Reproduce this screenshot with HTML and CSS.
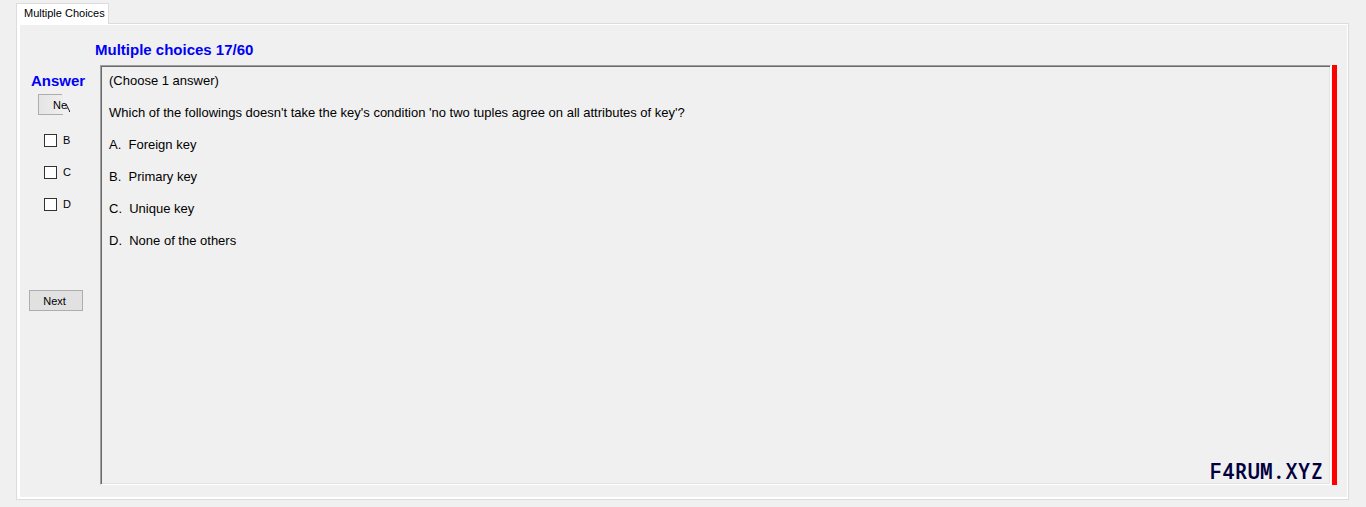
FILE: index.html
```html
<!DOCTYPE html>
<html lang="en">
<head>
<meta charset="utf-8">
<title>Multiple Choices</title>
<link rel="stylesheet" href="styles.css">
</head>
<body>
<div class="tabs" role="tablist">
  <button class="tab" role="tab" id="tab-mc" aria-selected="true" aria-controls="panel-mc">Multiple Choices</button>
</div>
<main class="panel" id="panel-mc" role="tabpanel" aria-labelledby="tab-mc">
  <h1 class="title">Multiple choices 17/60</h1>
  <div class="content">
    <form class="sidebar">
      <h2 class="answer-title">Answer</h2>
      <button class="partial" type="button"><span>Ne</span><svg class="scrap" width="6" height="12" viewBox="0 0 6 12" aria-hidden="true"><path d="M1 3L4.500 10M1.500 8L2.500 6.500M4 10.500H5" fill="none" stroke="#222233" stroke-width="1"/></svg></button>
      <label class="choice"><input type="checkbox" name="b">B</label>
      <label class="choice"><input type="checkbox" name="c">C</label>
      <label class="choice"><input type="checkbox" name="d">D</label>
      <button class="next" type="button">Next</button>
    </form>
    <section class="question">
      <div class="text">
        <p>(Choose 1 answer)</p>
        <p>Which of the followings doesn't take the key's condition 'no two tuples agree on all attributes of key'?</p>
        <p>A.  Foreign key</p>
        <p>B.  Primary key</p>
        <p>C.  Unique key</p>
        <p>D.  None of the others</p>
      </div>
      <p class="brand">F4RUM.XYZ</p>
    </section>
    <div class="marker"></div>
  </div>
</main>
</body>
</html>
```
FILE: styles.css
```css
* { box-sizing: border-box; }
html { height: 100%; }
body {
  margin: 0;
  min-height: 100%;
  padding: 3px 17px 7px 16px;
  display: flex;
  flex-direction: column;
  background: #f0f0f0;
  color: #000;
  font: 11px/16px "Liberation Sans", Arial, sans-serif;
}
h1, h2, p { margin: 0; }
button { font: inherit; color: inherit; border-radius: 0; }
.tabs { display: flex; }
.tab {
  height: 21px;
  margin-bottom: -1px;
  padding: 0 3px 2px 7px;
  border: 1px solid #dcdcdc;
  border-bottom: 0;
  background: #fff;
  position: relative;
  z-index: 1;
}
.panel {
  flex: 1;
  display: flex;
  flex-direction: column;
  border: 1px solid #dcdcdc;
  box-shadow: inset 3px 0 #fff, inset 0 1px #fff, inset -1px 0 #fff, inset 0 -2px #fff;
  padding: 18px 11px 14px 12px;
}
.title, .answer-title {
  color: #0000f4;
  font: bold 15px/16px "Liberation Sans", Arial, sans-serif;
}
.title { margin: 0 0 7px 66px; }
.content { flex: 1; display: flex; }
.sidebar {
  width: 71px;
  display: flex;
  flex-direction: column;
  align-items: flex-start;
}
.answer-title { margin: 8px 0 5px 2px; }
.partial {
  display: flex;
  align-items: center;
  width: 32px;
  height: 21px;
  margin: 0 0 9px 9px;
  padding: 0 0 0 15px;
  border: 0;
  background:
    linear-gradient(#adadad, #adadad) 0 0 / 1px 21px no-repeat,
    linear-gradient(#adadad, #adadad) 0 0 / 24px 1px no-repeat,
    linear-gradient(#adadad, #adadad) 0 20px / 25px 1px no-repeat,
    linear-gradient(90deg, #e4e4e4, #eeeeee) 0 0 / 25px 21px no-repeat;
}
.scrap { flex: none; margin-top: 4px; margin-left: -2px; }
.choice {
  display: flex;
  align-items: center;
  gap: 6px;
  height: 32px;
  padding-left: 15px;
}
.choice input {
  appearance: none;
  width: 13px;
  height: 13px;
  margin: 0;
  border: 1px solid #333;
  background: #fff;
}
.choice input:checked { background: #333; }
.next {
  width: 54px;
  height: 21px;
  margin-top: 70px;
  padding: 0 3px 0 0;
  border: 1px solid #adadad;
  background: #e1e1e1;
}
.question {
  flex: 1;
  display: flex;
  flex-direction: column;
  justify-content: space-between;
  padding: 7px 7px 1px 8px;
  border: 1px solid;
  border-color: #a0a0a0 #fff #fff #a0a0a0;
  box-shadow: inset 1px 1px #696969, inset -1px -1px #e3e3e3;
}
.text {
  display: flex;
  flex-direction: column;
  gap: 16px;
  font: 13px/16px "Liberation Sans", Arial, sans-serif;
  white-space: pre-wrap;
}
.brand {
  align-self: flex-end;
  color: #000040;
  font: 600 21px/24px "Noto Sans Mono", "DejaVu Sans Mono", monospace;
}
.marker { width: 5px; margin-left: 1px; background: #f00; }
```
